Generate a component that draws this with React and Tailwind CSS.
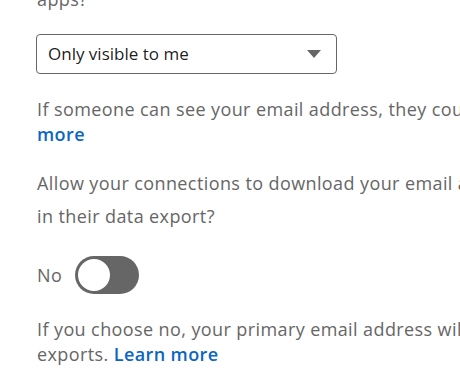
export default function App() {
  return (
    <div
      className="w-[460px] h-[386px] overflow-hidden bg-white"
      style={{ fontFamily: '"Open Sans", "Noto Sans", sans-serif' }}
    >
      <div className="w-[760px] pl-[37px] -mt-[16px] tracking-[0.4px]">
        {/* Question (cut off at top) */}
        <p className="text-[18px] leading-[30px] text-[#666666] whitespace-nowrap">
          apps?
        </p>

        {/* Select */}
        <div className="mt-[20px] w-[301px] h-[40px] -ml-px flex items-center justify-between border border-[#666666] rounded-[4px] pl-[11px] pr-[14px]">
          <span className="text-[17px] tracking-normal text-[#000000e6]">Only visible to me</span>
          <svg width="16" height="10" viewBox="0 0 16 10">
            <path d="M1 1 L15 1 L8 9 Z" fill="#666666" />
          </svg>
        </div>

        {/* Description */}
        <p className="mt-[23px] text-[18px] leading-[25px] text-[#666666] whitespace-nowrap">
          If someone can see your email address, they could download it in their data export. Learn
          <br />
          <a className="font-semibold text-[#0a66c2]">more</a>
        </p>

        {/* Question */}
        <p className="mt-[20px] text-[18px] leading-[33px] text-[#666666] whitespace-nowrap">
          Allow your connections to download your email address
          <br />
          in their data export?
        </p>

        {/* Toggle */}
        <div className="mt-[23px] flex items-center gap-[13px]">
          <span className="text-[18px] text-[#666666]">No</span>
          <div className="w-[64px] h-[38px] rounded-full bg-[#666666] flex items-center px-[1px]">
            <div className="w-[36px] h-[36px] rounded-full bg-white border-2 border-[#666666]" />
          </div>
        </div>

        {/* Description */}
        <p className="mt-[23px] text-[18px] leading-[25px] text-[#666666] whitespace-nowrap">
          If you choose no, your primary email address will not be included in their data
          <br />
          exports. <a className="font-semibold text-[#0a66c2]">Learn more</a>
        </p>
      </div>
    </div>
  );
}
